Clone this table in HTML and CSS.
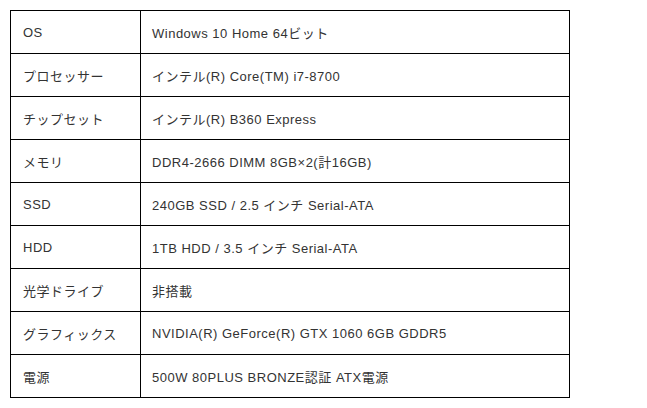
FILE: index.html
```html
<!DOCTYPE html>
<html lang="ja">
<head>
<meta charset="utf-8">
<link rel="stylesheet" href="styles.css">
</head>
<body>
<table class="spec">
  <tr><th>OS</th><td>Windows 10 Home 64ビット</td></tr>
  <tr><th>プロセッサー</th><td>インテル(R) Core(TM) i7-8700</td></tr>
  <tr><th>チップセット</th><td>インテル(R) B360 Express</td></tr>
  <tr><th>メモリ</th><td>DDR4-2666 DIMM 8GB×2(計16GB)</td></tr>
  <tr><th>SSD</th><td>240GB SSD / 2.5 インチ Serial-ATA</td></tr>
  <tr><th>HDD</th><td>1TB HDD / 3.5 インチ Serial-ATA</td></tr>
  <tr><th>光学ドライブ</th><td>非搭載</td></tr>
  <tr><th>グラフィックス</th><td>NVIDIA(R) GeForce(R) GTX 1060 6GB GDDR5</td></tr>
  <tr><th>電源</th><td>500W 80PLUS BRONZE認証 ATX電源</td></tr>
</table>
</body>
</html>
```
FILE: styles.css
```css
html, body {
  background: #fff;
}
body {
  margin: 10px;
  font-family: "Liberation Sans", "Noto Sans CJK JP", sans-serif;
  font-size: 13px;
  letter-spacing: 0.5px;
  color: #333;
}
.spec {
  border-collapse: collapse;
  width: 560px;
}
.spec th,
.spec td {
  border: 1px solid #000;
  height: 43px;
  padding: 0 11px;
  box-sizing: border-box;
  text-align: left;
  font-weight: normal;
  vertical-align: middle;
}
.spec th {
  width: 130px;
  padding-left: 12px;
}
```
